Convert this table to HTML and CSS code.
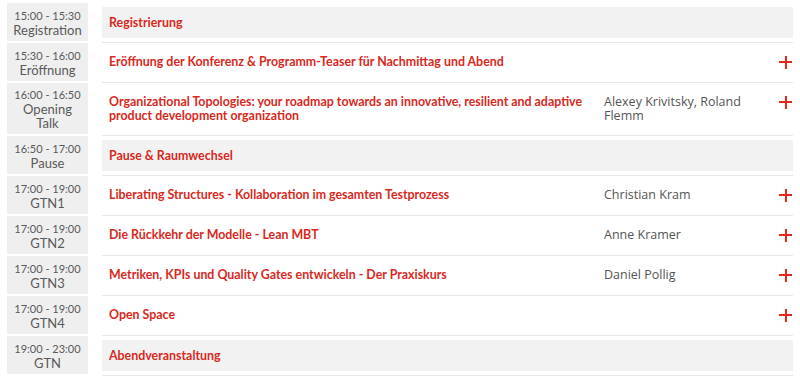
FILE: index.html
```html
<!DOCTYPE html>
<html lang="de">
<head>
<meta charset="utf-8">
<link rel="stylesheet" href="styles.css">
</head>
<body>
<div class="agenda">
  <div class="row">
    <div class="time"><span class="slot">15:00 - 15:30</span><span class="room">Registration</span></div>
    <div class="item item--break"><div class="band"><span class="title">Registrierung</span></div></div>
  </div>
  <div class="row">
    <div class="time"><span class="slot">15:30 - 16:00</span><span class="room">Eröffnung</span></div>
    <div class="item"><span class="title">Eröffnung der Konferenz &amp; Programm-Teaser für Nachmittag und Abend</span><span class="speaker"></span><span class="plus"></span></div>
  </div>
  <div class="row">
    <div class="time"><span class="slot">16:00 - 16:50</span><span class="room">Opening Talk</span></div>
    <div class="item"><span class="title">Organizational Topologies: your roadmap towards an innovative, resilient and adaptive product development organization</span><span class="speaker">Alexey Krivitsky, Roland Flemm</span><span class="plus"></span></div>
  </div>
  <div class="row">
    <div class="time"><span class="slot">16:50 - 17:00</span><span class="room">Pause</span></div>
    <div class="item item--break"><div class="band"><span class="title">Pause &amp; Raumwechsel</span></div></div>
  </div>
  <div class="row">
    <div class="time"><span class="slot">17:00 - 19:00</span><span class="room">GTN1</span></div>
    <div class="item"><span class="title">Liberating Structures - Kollaboration im gesamten Testprozess</span><span class="speaker">Christian Kram</span><span class="plus"></span></div>
  </div>
  <div class="row">
    <div class="time"><span class="slot">17:00 - 19:00</span><span class="room">GTN2</span></div>
    <div class="item"><span class="title">Die Rückkehr der Modelle - Lean MBT</span><span class="speaker">Anne Kramer</span><span class="plus"></span></div>
  </div>
  <div class="row">
    <div class="time"><span class="slot">17:00 - 19:00</span><span class="room">GTN3</span></div>
    <div class="item"><span class="title">Metriken, KPIs und Quality Gates entwickeln - Der Praxiskurs</span><span class="speaker">Daniel Pollig</span><span class="plus"></span></div>
  </div>
  <div class="row">
    <div class="time"><span class="slot">17:00 - 19:00</span><span class="room">GTN4</span></div>
    <div class="item"><span class="title">Open Space</span><span class="speaker"></span><span class="plus"></span></div>
  </div>
  <div class="row">
    <div class="time"><span class="slot">19:00 - 23:00</span><span class="room">GTN</span></div>
    <div class="item item--break"><div class="band"><span class="title">Abendveranstaltung</span></div></div>
  </div>
</div>
</body>
</html>
```

FILE: styles.css
```css
html, body {
  margin: 0;
  padding: 0;
  background: #fff;
}
.agenda {
  padding: 3px 7px 0 7px;
  width: 786px;
}
.row {
  display: flex;
  align-items: stretch;
}
.time {
  width: 81px;
  flex: none;
  background: #efefef;
  margin-bottom: 2px;
  display: flex;
  flex-direction: column;
  justify-content: center;
  align-items: center;
  text-align: center;
  padding: 5px 4px 4px;
  box-sizing: border-box;
  font-family: "Lato", sans-serif;
  color: #595959;
}
.slot {
  display: block;
  font-size: 11px;
  line-height: 13px;
}
.room {
  display: block;
  font-size: 13px;
  line-height: 14px;
  padding-top: 1px;
}
.item {
  flex: 1;
  box-sizing: border-box;
  min-height: 40px;
  margin-left: 14px;
  border-bottom: 1px solid #e8e8e8;
  display: flex;
  align-items: flex-start;
  gap: 10px;
  padding: 12px 1px 12px 7px;
}
.item--break {
  padding: 4px 0;
  display: block;
}
.band {
  background: #f2f2f2;
  padding: 8px 7px;
  line-height: 15px;
}
.title {
  display: block;
  flex: 1;
  font-family: "Lato", sans-serif;
  font-weight: 700;
  font-size: 12.4px;
  line-height: 14px;
  color: #d8291d;
}
.band .title {
  line-height: 15px;
}
.speaker {
  width: 165px;
  flex: none;
  font-family: "Open Sans", sans-serif;
  font-size: 12.5px;
  line-height: 14px;
  color: #555;
}
.plus {
  width: 13px;
  height: 14px;
  flex: none;
  position: relative;
}
.plus::before, .plus::after {
  content: "";
  position: absolute;
  background: #e3281b;
}
.plus::before {
  left: 0;
  right: 0;
  top: 6px;
  height: 2px;
}
.plus::after {
  top: 0.5px;
  bottom: 0.5px;
  left: 5.5px;
  width: 2px;
}
```
